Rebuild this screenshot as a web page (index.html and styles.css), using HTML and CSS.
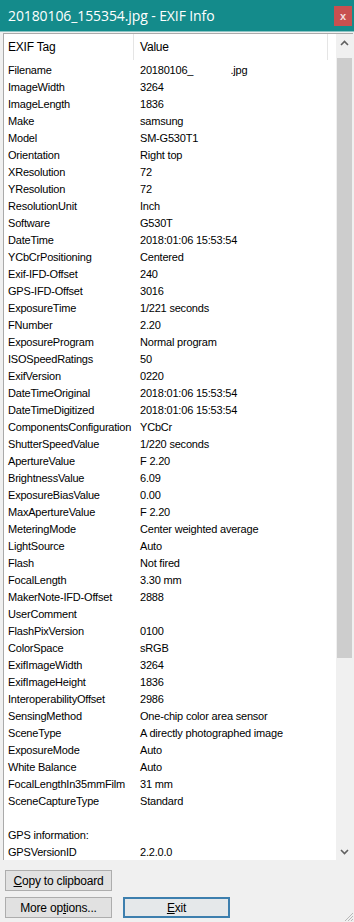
FILE: index.html
```html
<!DOCTYPE html>
<html lang="en">
<head>
    <meta charset="UTF-8">
    <meta name="viewport" content="width=device-width, initial-scale=1.0">
    <title>EXIF Info</title>
    <link rel="stylesheet" href="styles.css">
</head>
<body>

    <div class="window">

        <!-- Title bar -->
        <div class="titlebar">
            <span class="title">20180106_155354.jpg - EXIF Info</span>
            <span class="close">x</span>
        </div>

        <!-- EXIF list -->
        <div class="listview">
            <div class="list">
                <div class="header">
                    <div class="col-tag">EXIF Tag</div>
                    <div class="col-value">Value</div>
                    <div class="col-rest"></div>
                </div>
                <div id="rows" class="rows">
                    <!-- rows are filled by the script -->
                </div>
            </div>
            <div class="scrollbar">
                <div class="arrow">
                    <svg width="9" height="6" viewBox="0 0 9 6"><path d="M1 5 L4.5 1.5 L8 5" fill="none" stroke="#606060" stroke-width="1.6"/></svg>
                </div>
                <div class="thumb"></div>
                <div class="track"></div>
                <div class="arrow">
                    <svg width="9" height="6" viewBox="0 0 9 6"><path d="M1 1 L4.5 4.5 L8 1" fill="none" stroke="#606060" stroke-width="1.6"/></svg>
                </div>
            </div>
        </div>

        <!-- Buttons -->
        <div class="buttons">
            <div class="btn-row">
                <button class="btn"><u>C</u>opy to clipboard</button>
            </div>
            <div class="btn-row">
                <button class="btn">More op<u>t</u>ions...</button>
                <button class="btn default"><u>E</u>xit</button>
            </div>
            <svg class="grip" width="12" height="12" viewBox="0 0 12 12">
                <path d="M11 3 L3 11 M11 6 L6 11 M11 9 L9 11" stroke="#b8b8b8" stroke-width="1"/>
            </svg>
        </div>

    </div>

    <script>
        const exifData = [
            ['Filename', '20180106_\u00a0\u00a0\u00a0\u00a0\u00a0\u00a0\u00a0\u00a0\u00a0\u00a0\u00a0\u00a0\u00a0.jpg'],
            ['ImageWidth', '3264'],
            ['ImageLength', '1836'],
            ['Make', 'samsung'],
            ['Model', 'SM-G530T1'],
            ['Orientation', 'Right top'],
            ['XResolution', '72'],
            ['YResolution', '72'],
            ['ResolutionUnit', 'Inch'],
            ['Software', 'G530T'],
            ['DateTime', '2018:01:06 15:53:54'],
            ['YCbCrPositioning', 'Centered'],
            ['Exif-IFD-Offset', '240'],
            ['GPS-IFD-Offset', '3016'],
            ['ExposureTime', '1/221 seconds'],
            ['FNumber', '2.20'],
            ['ExposureProgram', 'Normal program'],
            ['ISOSpeedRatings', '50'],
            ['ExifVersion', '0220'],
            ['DateTimeOriginal', '2018:01:06 15:53:54'],
            ['DateTimeDigitized', '2018:01:06 15:53:54'],
            ['ComponentsConfiguration', 'YCbCr'],
            ['ShutterSpeedValue', '1/220 seconds'],
            ['ApertureValue', 'F 2.20'],
            ['BrightnessValue', '6.09'],
            ['ExposureBiasValue', '0.00'],
            ['MaxApertureValue', 'F 2.20'],
            ['MeteringMode', 'Center weighted average'],
            ['LightSource', 'Auto'],
            ['Flash', 'Not fired'],
            ['FocalLength', '3.30 mm'],
            ['MakerNote-IFD-Offset', '2888'],
            ['UserComment', ''],
            ['FlashPixVersion', '0100'],
            ['ColorSpace', 'sRGB'],
            ['ExifImageWidth', '3264'],
            ['ExifImageHeight', '1836'],
            ['InteroperabilityOffset', '2986'],
            ['SensingMethod', 'One-chip color area sensor'],
            ['SceneType', 'A directly photographed image'],
            ['ExposureMode', 'Auto'],
            ['White Balance', 'Auto'],
            ['FocalLengthIn35mmFilm', '31 mm'],
            ['SceneCaptureType', 'Standard'],
            ['', ''],
            ['GPS information:', ''],
            ['GPSVersionID', '2.2.0.0']
        ];

        const rows = document.getElementById('rows');
        exifData.forEach(item => {
            const row = document.createElement('div');
            row.className = 'row';
            const tag = document.createElement('div');
            tag.className = 'col-tag';
            tag.textContent = item[0];
            const value = document.createElement('div');
            value.className = 'col-value';
            value.textContent = item[1];
            row.appendChild(tag);
            row.appendChild(value);
            rows.appendChild(row);
        });
    </script>

</body>
</html>
```

FILE: styles.css
```css
* {
    box-sizing: border-box;
}

body {
    margin: 0;
    padding: 0;
    font-family: "Liberation Sans", Arial, sans-serif;
    font-size: 11px;
    letter-spacing: -0.2px;
    color: #000;
    background-color: #f0f0f0;
}

.window {
    width: 354px;
    height: 922px;
    display: flex;
    flex-direction: column;
    background-color: #f0f0f0;
    position: relative;
    overflow: hidden;
}

/* Title bar */
.titlebar {
    height: 32px;
    flex-shrink: 0;
    background-color: #148b8b;
    display: flex;
    align-items: center;
    justify-content: space-between;
    padding: 0 2px 0 8px;
    border-bottom: 1px solid #8cc4c4;
}

.title {
    color: #fff;
    font-family: "Open Sans", "Liberation Sans", sans-serif;
    font-size: 14px;
    letter-spacing: -0.1px;
    margin-top: -1px;
}

.close {
    width: 18px;
    height: 20px;
    background-color: #c8504f;
    color: #f4dede;
    font-size: 11px;
    font-weight: bold;
    display: flex;
    align-items: center;
    justify-content: center;
    margin-top: 1px;
}

/* List view */
.listview {
    margin: 1px 1px 0 3px;
    height: 827px;
    flex-shrink: 0;
    display: flex;
    background-color: #fff;
    border-left: 1px solid #aaa;
    border-top: 1px solid #aaa;
    overflow: hidden;
}

.list {
    flex: 1;
    overflow: hidden;
}

.header {
    display: flex;
    height: 26px;
}

.header .col-tag,
.header .col-value {
    height: 26px;
    display: flex;
    align-items: center;
    font-size: 12px;
}

.header .col-tag {
    width: 130px;
    border-right: 1px solid #e5e5e5;
}

.header .col-value {
    width: 194px;
    padding-left: 6px;
    border-right: 1px solid #e5e5e5;
}

.col-tag {
    width: 136px;
    padding-left: 4px;
    white-space: nowrap;
    flex-shrink: 0;
}

.col-value {
    white-space: nowrap;
}

.rows {
    padding-top: 1px;
}

.row {
    display: flex;
    height: 17px;
    align-items: center;
}

/* Scrollbar */
.scrollbar {
    width: 17px;
    flex-shrink: 0;
    display: flex;
    flex-direction: column;
    background-color: #f0f0f0;
}

.arrow {
    height: 17px;
    display: flex;
    align-items: center;
    justify-content: center;
    flex-shrink: 0;
}

.thumb {
    height: 600px;
    margin: 7px 1px 0 1px;
    background-color: #cdcdcd;
}

.track {
    flex: 1;
}

/* Buttons */
.buttons {
    flex: 1;
    padding: 10px 0 0 5px;
    display: flex;
    flex-direction: column;
    gap: 6px;
}

.btn-row {
    display: flex;
    gap: 11px;
}

.btn {
    width: 107px;
    height: 21px;
    padding: 0;
    font-family: "Liberation Sans", Arial, sans-serif;
    font-size: 12px;
    letter-spacing: -0.2px;
    color: #000;
    background-color: #e1e1e1;
    border: 1px solid #adadad;
    border-radius: 0;
}

.btn.default {
    border: 2px solid #3d7fae;
    background-color: #e5e8ea;
}

.grip {
    position: absolute;
    right: 0;
    bottom: 0;
}
```
